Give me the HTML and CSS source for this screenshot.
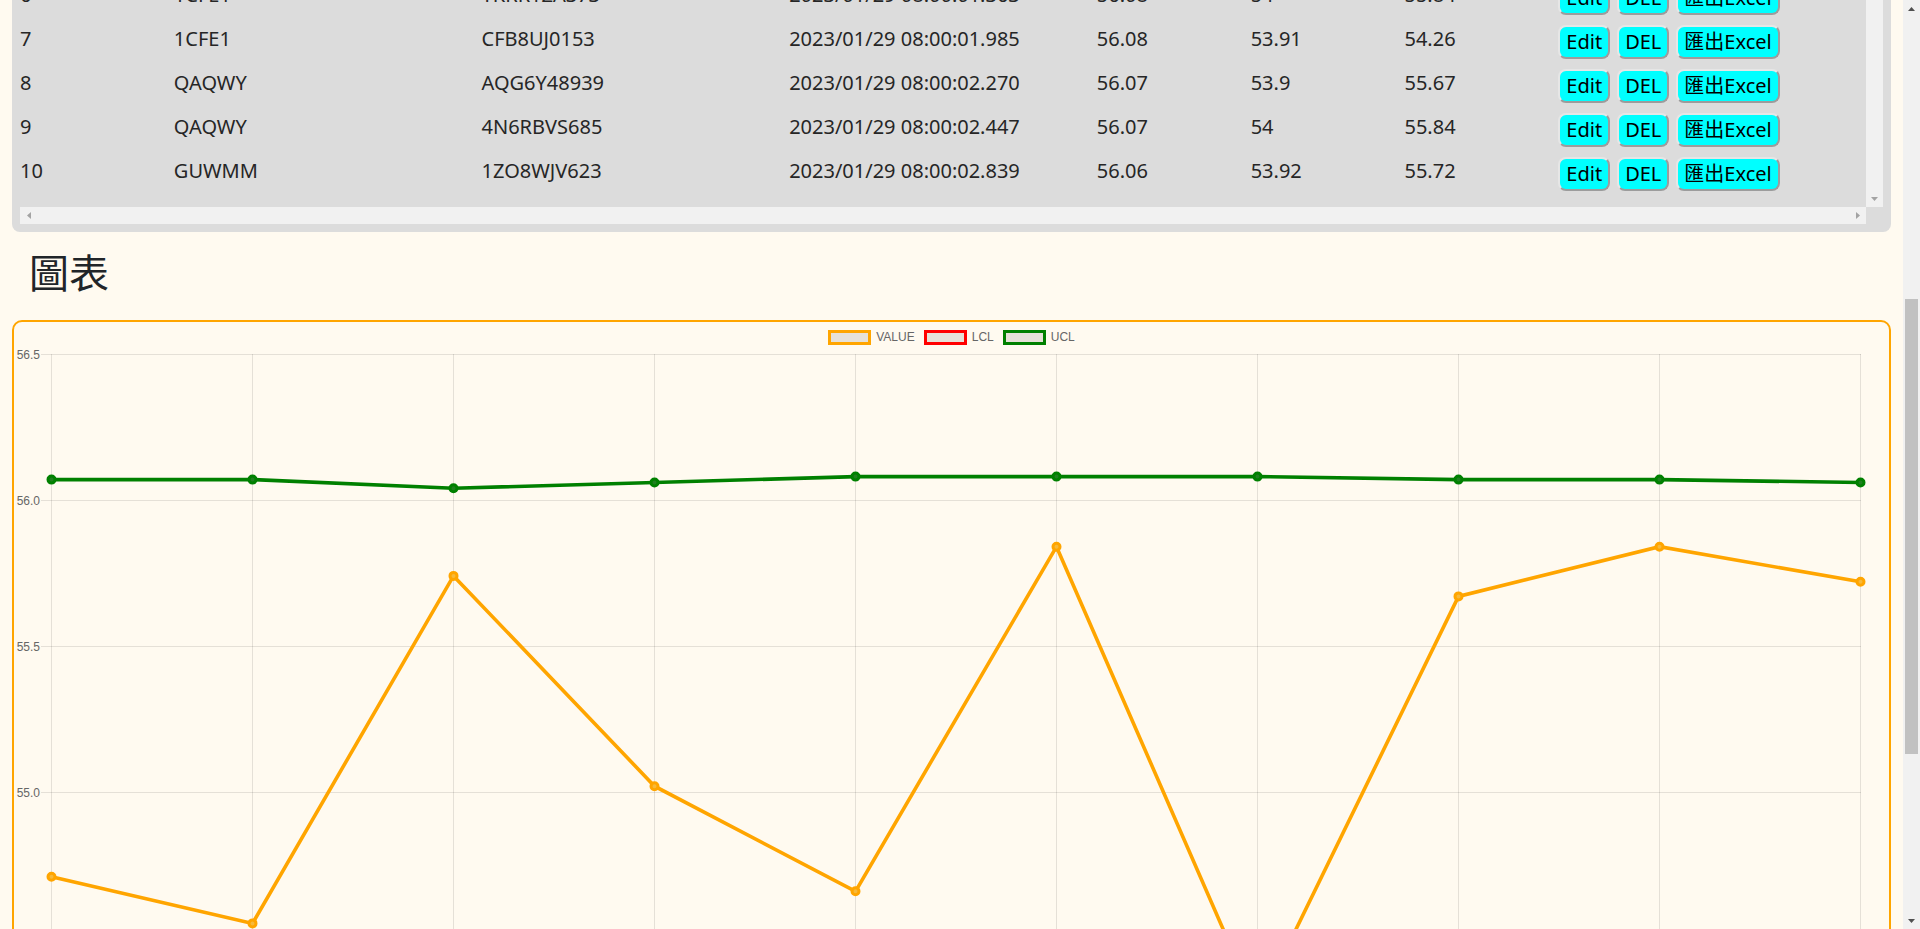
FILE: index.html
```html
<!DOCTYPE html>
<html lang="zh-Hant">
<head>
<meta charset="utf-8">
<title>SPC</title>
<link rel="stylesheet" href="styles.css">
</head>
<body>
<div class="page">
  <main class="main">
    <section class="panel">
      <div class="panel-body">
        <div class="table-view">
          <div class="rows">
            <div class="row">
              <div class="cell">6</div><div class="cell">1CFE1</div><div class="cell">YKRR1ZA373</div><div class="cell">2023/01/29 08:00:01.363</div><div class="cell">56.08</div><div class="cell">54</div><div class="cell">55.84</div>
              <div class="actions"><button class="btn">Edit</button><button class="btn">DEL</button><button class="btn">匯出Excel</button></div>
            </div>
            <div class="row">
              <div class="cell">7</div><div class="cell">1CFE1</div><div class="cell">CFB8UJ0153</div><div class="cell">2023/01/29 08:00:01.985</div><div class="cell">56.08</div><div class="cell">53.91</div><div class="cell">54.26</div>
              <div class="actions"><button class="btn">Edit</button><button class="btn">DEL</button><button class="btn">匯出Excel</button></div>
            </div>
            <div class="row">
              <div class="cell">8</div><div class="cell">QAQWY</div><div class="cell">AQG6Y48939</div><div class="cell">2023/01/29 08:00:02.270</div><div class="cell">56.07</div><div class="cell">53.9</div><div class="cell">55.67</div>
              <div class="actions"><button class="btn">Edit</button><button class="btn">DEL</button><button class="btn">匯出Excel</button></div>
            </div>
            <div class="row">
              <div class="cell">9</div><div class="cell">QAQWY</div><div class="cell">4N6RBVS685</div><div class="cell">2023/01/29 08:00:02.447</div><div class="cell">56.07</div><div class="cell">54</div><div class="cell">55.84</div>
              <div class="actions"><button class="btn">Edit</button><button class="btn">DEL</button><button class="btn">匯出Excel</button></div>
            </div>
            <div class="row">
              <div class="cell">10</div><div class="cell">GUWMM</div><div class="cell">1ZO8WJV623</div><div class="cell">2023/01/29 08:00:02.839</div><div class="cell">56.06</div><div class="cell">53.92</div><div class="cell">55.72</div>
              <div class="actions"><button class="btn">Edit</button><button class="btn">DEL</button><button class="btn">匯出Excel</button></div>
            </div>
          </div>
        </div>
        <div class="vscroll">
          <div class="sb-btn"><svg width="7" height="4" viewBox="0 0 7 4"><path d="M0 0H7L3.5 4Z" fill="#a3a3a3"/></svg></div>
        </div>
      </div>
      <div class="hscroll-row">
        <div class="hscroll">
          <div class="sb-btn"><svg width="4" height="7" viewBox="0 0 4 7"><path d="M4 0V7L0 3.5Z" fill="#a3a3a3"/></svg></div>
          <div class="sb-btn"><svg width="4" height="7" viewBox="0 0 4 7"><path d="M0 0V7L4 3.5Z" fill="#a3a3a3"/></svg></div>
        </div>
        <div class="corner"></div>
      </div>
    </section>

    <h2 class="title">圖表</h2>

    <section class="chart-card">
      <div class="legend">
        <div class="legend-item"><span class="lbox lbox-value"></span><span class="ltext">VALUE</span></div>
        <div class="legend-item"><span class="lbox lbox-lcl"></span><span class="ltext">LCL</span></div>
        <div class="legend-item"><span class="lbox lbox-ucl"></span><span class="ltext">UCL</span></div>
      </div>
      <svg class="plot" width="1874" height="700" viewBox="0 0 1874 700">
        <g stroke="rgba(0,0,0,0.1)" stroke-width="1" fill="none">
          <path d="M27 8.5H1847 M27 154.5H1847 M27 300.5H1847 M27 446.5H1847 M27 592.5H1847 M27 738.5H1847 M27 884.5H1847"/>
          <path d="M37.5 8V900 M238.5 8V900 M439.5 8V900 M640.5 8V900 M841.5 8V900 M1042.5 8V900 M1243.5 8V900 M1444.5 8V900 M1645.5 8V900 M1846.5 8V900"/>
        </g>
        <g class="ticks" text-anchor="end">
          <text x="26" y="12.5">56.5</text>
          <text x="26" y="158.5">56.0</text>
          <text x="26" y="304.5">55.5</text>
          <text x="26" y="450.5">55.0</text>
          <text x="26" y="596.5">54.5</text>
          <text x="26" y="742.5">54.0</text>
        </g>
        <g fill="none" stroke-width="3.6" stroke-linejoin="miter">
          <polyline stroke="#008000" points="37.5,133.6 238.5,133.6 439.5,142.3 640.5,136.5 841.5,130.6 1042.5,130.6 1243.5,130.6 1444.5,133.6 1645.5,133.6 1846.5,136.5"/>
          <polyline stroke="#ff0000" points="37.5,767 238.5,767 439.5,764 640.5,767 841.5,765 1042.5,738 1243.5,764.4 1444.5,767.2 1645.5,738 1846.5,761.4"/>
          <polyline stroke="#ffa500" points="37.5,530.7 238.5,577.4 439.5,229.9 640.5,440.2 841.5,545.3 1042.5,200.7 1243.5,662.1 1444.5,250.4 1645.5,200.7 1846.5,235.8"/>
        </g>
        <g stroke="#008000" stroke-width="3" fill="#1f7f1f">
          <circle cx="37.5" cy="133.6" r="3.5"/><circle cx="238.5" cy="133.6" r="3.5"/><circle cx="439.5" cy="142.3" r="3.5"/><circle cx="640.5" cy="136.5" r="3.5"/><circle cx="841.5" cy="130.6" r="3.5"/><circle cx="1042.5" cy="130.6" r="3.5"/><circle cx="1243.5" cy="130.6" r="3.5"/><circle cx="1444.5" cy="133.6" r="3.5"/><circle cx="1645.5" cy="133.6" r="3.5"/><circle cx="1846.5" cy="136.5" r="3.5"/>
        </g>
        <g stroke="#ffa500" stroke-width="3" fill="#f7b93a">
          <circle cx="37.5" cy="530.7" r="3.5"/><circle cx="238.5" cy="577.4" r="3.5"/><circle cx="439.5" cy="229.9" r="3.5"/><circle cx="640.5" cy="440.2" r="3.5"/><circle cx="841.5" cy="545.3" r="3.5"/><circle cx="1042.5" cy="200.7" r="3.5"/><circle cx="1243.5" cy="662.1" r="3.5"/><circle cx="1444.5" cy="250.4" r="3.5"/><circle cx="1645.5" cy="200.7" r="3.5"/><circle cx="1846.5" cy="235.8" r="3.5"/>
        </g>
      </svg>
    </section>
  </main>

  <aside class="page-scroll">
    <div class="psb-btn"><svg width="7" height="4" viewBox="0 0 7 4"><path d="M0 4H7L3.5 0Z" fill="#505050"/></svg></div>
    <div class="psb-track"><div class="psb-thumb"></div></div>
    <div class="psb-btn"><svg width="7" height="4" viewBox="0 0 7 4"><path d="M0 0H7L3.5 4Z" fill="#505050"/></svg></div>
  </aside>
</div>
</body>
</html>
```

FILE: styles.css
```css
html, body {
  margin: 0;
  padding: 0;
}

body {
  background: #fffaf0;
  color: #262626;
  font-family: "Noto Sans", "Noto Sans CJK TC", sans-serif;
  overflow: hidden;
}

.page {
  display: flex;
  height: 929px;
  overflow: hidden;
}

.main {
  flex: 1;
  min-width: 0;
  padding: 0 12px;
  overflow: hidden;
}

/* ---------- table panel ---------- */
.panel {
  height: 232px;
  box-sizing: border-box;
  background: #dcdcdc;
  border-radius: 0 0 8px 8px;
  padding: 0 8px 8px;
  display: flex;
  flex-direction: column;
}

.panel-body {
  flex: 1;
  min-height: 0;
  display: flex;
}

.table-view {
  flex: 1;
  min-width: 0;
  overflow: hidden;
  display: flex;
  flex-direction: column;
  justify-content: flex-end;
  padding-bottom: 11px;
}

.rows {
  flex-shrink: 0;
}

.row {
  display: grid;
  grid-template-columns: 1fr 2fr 2fr 2fr 1fr 1fr 1fr 2fr;
  height: 44px;
  font-size: 20px;
}

.cell {
  padding-top: 4.5px;
  line-height: normal;
  white-space: nowrap;
}

.actions {
  display: flex;
  gap: 7px;
  padding-top: 5px;
}

.btn {
  height: 34px;
  box-sizing: border-box;
  padding: 0 6px;
  margin: 0;
  font-family: "Noto Sans", "Noto Sans CJK TC", sans-serif;
  font-size: 20px;
  line-height: 28px;
  color: #000;
  background: #00ffff;
  border: 2px solid;
  border-color: #e6e6e6 #9c9c9c #9c9c9c #e6e6e6;
  border-radius: 8px;
  white-space: nowrap;
}

.vscroll {
  width: 17px;
  background: #f1f1f1;
  display: flex;
  flex-direction: column;
  justify-content: flex-end;
}

.sb-btn {
  width: 17px;
  height: 17px;
  display: flex;
  align-items: center;
  justify-content: center;
}

.hscroll-row {
  height: 17px;
  display: flex;
}

.hscroll {
  flex: 1;
  background: #f1f1f1;
  display: flex;
  justify-content: space-between;
}

.corner {
  width: 17px;
  background: #dcdcdc;
}

/* ---------- title ---------- */
.title {
  margin: 15px 0 25px;
  padding-left: 17px;
  font-family: "Noto Sans CJK TC", sans-serif;
  font-size: 40px;
  font-weight: 400;
  line-height: 48px;
  color: #212529;
}

/* ---------- chart ---------- */
.chart-card {
  height: 760px;
  border: 2px solid #ffa500;
  border-radius: 10px;
  background: #fffaf0;
  overflow: hidden;
}

.legend {
  height: 24px;
  box-sizing: border-box;
  padding-top: 8px;
  display: flex;
  justify-content: center;
  align-items: flex-start;
  gap: 9px;
  font-family: "Liberation Sans", Arial, sans-serif;
  font-size: 12px;
  color: #666;
}

.legend-item {
  display: flex;
  align-items: center;
  gap: 5px;
  height: 15px;
}

.lbox {
  width: 37px;
  height: 9px;
  border: 3px solid;
  background: #e6e1d8;
}

.lbox-value { border-color: #ffa500; }
.lbox-lcl { border-color: #ff0000; }
.lbox-ucl { border-color: #008000; }

.ltext {
  line-height: 15px;
}

.plot {
  display: block;
  overflow: visible;
}

.ticks text {
  font-family: "Liberation Sans", Arial, sans-serif;
  font-size: 12px;
  fill: #666;
}

/* ---------- page scrollbar ---------- */
.page-scroll {
  width: 17px;
  background: #f1f1f1;
  display: flex;
  flex-direction: column;
}

.psb-btn {
  height: 17px;
  display: flex;
  align-items: center;
  justify-content: center;
}

.psb-track {
  flex: 1;
  padding-top: 282px;
}

.psb-thumb {
  height: 455px;
  margin: 0 2px;
  background: #c1c1c1;
}
```
